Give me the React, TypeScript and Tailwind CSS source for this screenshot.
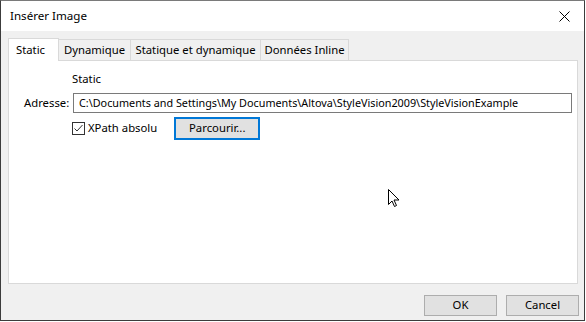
import React from "react";

export default function App() {
  const font = { fontFamily: '"Segoe UI", "Noto Sans", sans-serif' };
  return (
    <div className="w-[586px] h-[322px] bg-white relative overflow-hidden" style={font}>
      <div className="w-[585px] h-[321px] border border-[#3c3c3c] border-t-[#7a7a7a] flex flex-col bg-[#f0f0f0] text-[11.3px] text-black">
        <div className="h-[30px] bg-white flex items-center justify-between pl-[9px] pr-[14px] shrink-0 text-[11.6px]">
          <span className="leading-none">Insérer Image</span>
          <svg width="11" height="11" viewBox="0 0 11 11" className="mt-[1px]">
            <path d="M0.5 0.5 L10.5 10.5 M10.5 0.5 L0.5 10.5" stroke="#000" strokeWidth="1" />
          </svg>
        </div>
        <div className="flex-1 flex flex-col px-[7px] pt-[7px]">
          <div className="flex items-end h-[22px] relative z-10">
            <div className="h-[23px] w-[51px] bg-white border border-[#d9d9d9] border-b-0 flex items-center pl-[7px] -mb-[1px]">Static</div>
            <div className="h-[21px] w-[72px] justify-center bg-[#f0f0f0] border border-[#d9d9d9] border-l-0 border-b-0 flex items-center">Dynamique</div>
            <div className="h-[21px] w-[130px] justify-center bg-[#f0f0f0] border border-[#d9d9d9] border-l-0 border-b-0 flex items-center">Statique et dynamique</div>
            <div className="h-[21px] w-[88px] justify-center bg-[#f0f0f0] border border-[#d9d9d9] border-l-0 border-b-0 flex items-center">Données Inline</div>
          </div>
          <div className="h-[224px] w-[570px] bg-white border border-[#d9d9d9] relative">
            <div className="pl-[63px] pt-[10px] leading-[16px]">Static</div>
            <div className="flex items-center mt-[6px] pl-[15px]">
              <span className="w-[49px]">Adresse:</span>
              <div className="w-[499px] h-[20px] border border-[#7a7a7a] flex items-center pl-[5px] whitespace-nowrap overflow-hidden text-[10.8px]">
                C:\Documents and Settings\My Documents\Altova\StyleVision2009\StyleVisionExample
              </div>
            </div>
            <div className="flex items-center mt-[4px] pl-[63px]">
              <div className="w-[13px] h-[13px] border border-[#333] flex items-center justify-center">
                <svg width="11" height="11" viewBox="0 0 11 11">
                  <path d="M1.5 5.5 L4 8 L9.5 2" stroke="#333" strokeWidth="1" fill="none" />
                </svg>
              </div>
              <span className="ml-[3px]">XPath absolu</span>
              <div className="ml-[17px] w-[86px] h-[23px] bg-[#e1e1e1] border-2 border-[#0078d7] flex items-center justify-center">
                Parcourir...
              </div>
            </div>
            <svg className="absolute left-[379px] top-[128px]" width="12" height="19" viewBox="0 0 12 19">
              <path d="M0.5 0.5 L0.5 15.5 L4 12 L6.5 17.5 L8.5 16.5 L6 11 L11 11 Z" fill="#fff" stroke="#000" strokeWidth="1" />
            </svg>
          </div>
          <div className="flex justify-end gap-[9px] mt-[11px] -mr-[2px]">
            <div className="w-[73px] h-[21px] bg-[#e1e1e1] border border-[#adadad] flex items-center justify-center">OK</div>
            <div className="w-[73px] h-[21px] bg-[#e1e1e1] border border-[#adadad] flex items-center justify-center">Cancel</div>
          </div>
        </div>
      </div>
    </div>
  );
}
